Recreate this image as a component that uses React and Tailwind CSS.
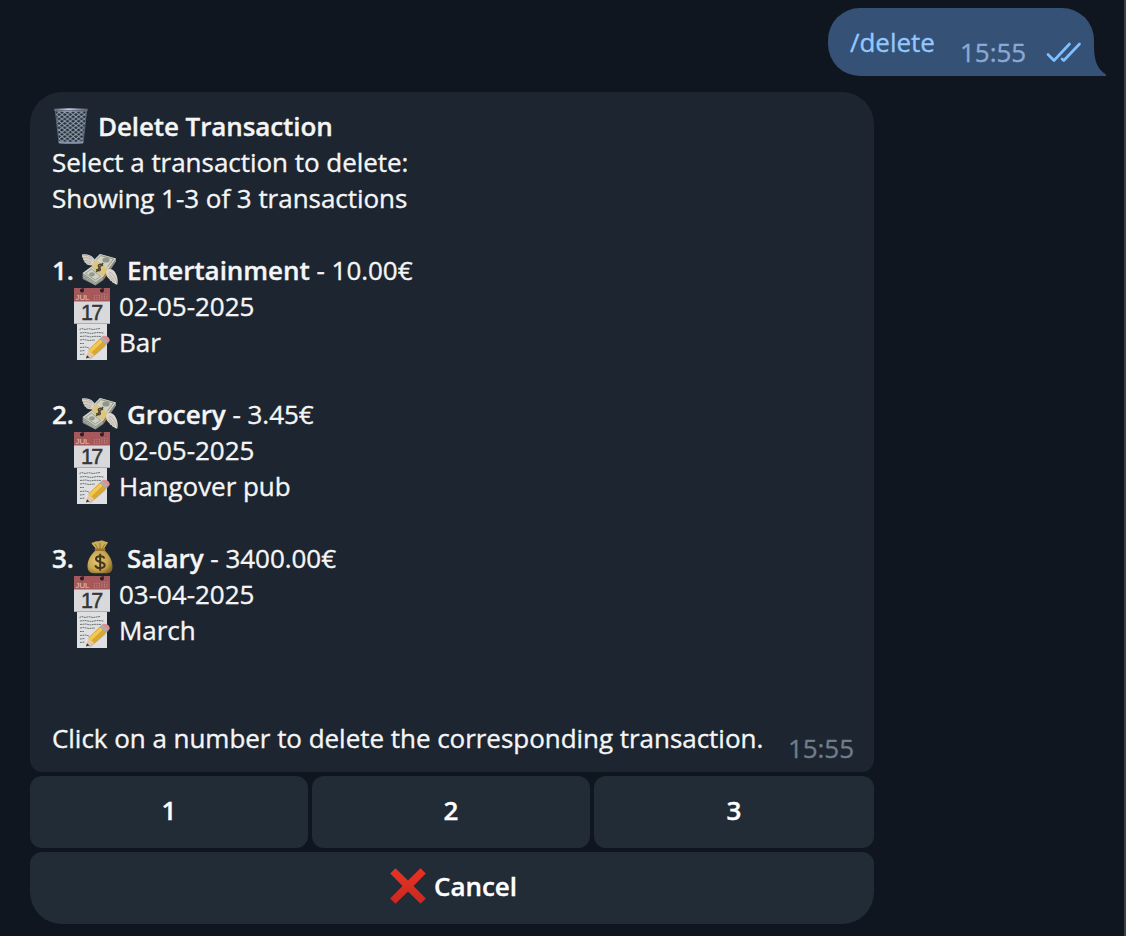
import React from 'react';

function Trash() {
  return (
    <svg className="h-9 w-9 shrink-0" viewBox="0 0 36 36">
      <defs>
        <pattern id="mesh" width="5.6" height="4.4" patternUnits="userSpaceOnUse">
          <path d="M0 0L5.600 4.400M5.600 0L0 4.400" stroke="#98a8b6" strokeWidth=".9" />
        </pattern>
        <linearGradient id="rim" x1="0" x2="1" y1="0" y2="0">
          <stop offset="0" stopColor="#626a73" />
          <stop offset=".4" stopColor="#c6d1e0" />
          <stop offset="1" stopColor="#665f5d" />
        </linearGradient>
      </defs>
      <g transform="translate(1.500 0)">
        <path d="M1.800 2L5.500 35H29.500L33.200 2Z" fill="#232c37" />
        <path d="M1.800 2L5.500 35H29.500L33.200 2Z" fill="url(#mesh)" stroke="#59636e" strokeWidth="1" />
        <path d="M5.200 33Q18 35 29.800 33L29.500 35.300Q18 36.300 5.500 35.300Z" fill="#8594a6" />
        <path d="M.7.700Q18-.3 34.300.700V3Q18 4.200.7 3Z" fill="url(#rim)" />
        <path d="M2 2.200Q18 3 33 2.200" fill="none" stroke="#535e78" strokeWidth=".8" />
      </g>
    </svg>
  );
}

function WingedMoney() {
  return (
    <svg className="h-9 w-9 shrink-0" viewBox="0 0 36 36">
      <path d="M12.500 13.500C7 14 4 12.500 3.800 11C2.500 10.800 2 9.500 2.500 8.800C1 8.300.8 7 1.300 6.300C0 5.500-.2 3.500.3 2.300C5 1.800 9.500 3 12 6.500C14 9 14 11.500 12.500 13.500Z" fill="#d6d2c8" />
      <path d="M1.500 6C5 5 8 6 10 8.500M2.800 8.800C5.500 8 7.500 9 9 10.500M4 11C6 10.500 7.500 11 9 12.300M1 3.300C5.500 3 8.500 4.500 10.500 6.500" stroke="#a3a098" strokeWidth=".7" fill="none" />
      <path d="M11.500 8.500L18 2L34 6.500V9.500L27 20L22.500 22Z" fill="#8b8e84" />
      <path d="M11.500 8.500L18 2L34 6.500L26 17.500L22 19.500Z" fill="#cfd2c4" />
      <path d="M14.500 7.800L18.800 3.600L31.500 7L25.500 15" fill="none" stroke="#81877b" strokeWidth=".8" />
      <ellipse cx="24" cy="8" rx="3.600" ry="2.600" fill="#8f968a" />
      <path d="M.7 21L9.500 14.500L21.500 25V28L13.500 33.500L.7 27Z" fill="#8b8e84" />
      <path d="M.7 21L9.500 14.500L21.500 24.500L13.500 30Z" fill="#cfd2c4" />
      <path d="M.7 22.500L13.500 31.300L21.500 26M.7 24.500L13.500 32.700" fill="none" stroke="#b9bbb0" strokeWidth=".7" />
      <path d="M3.500 21.300L9.500 17L18.500 24.500L13.300 28Z" fill="none" stroke="#81877b" strokeWidth=".7" />
      <ellipse cx="10" cy="22.300" rx="2.800" ry="2.100" fill="#949b8e" />
      <path d="M9.500 14.500L13.500 8L26.500 17L21.500 25Z" fill="#dfc680" />
      <path d="M21.500 25L26.500 17V20.500L21.500 28Z" fill="#a98945" />
      <path d="M21 13.600C18 11 15 13 17 15.200C19.500 17.500 18 20.200 14.200 17.300M14.300 20L21 11" fill="none" stroke="#4b432c" strokeWidth="1.500" />
      <path d="M24.500 18.500C27 15.500 31.500 17 33.500 21C35.500 24.500 36.200 28.500 35.300 32.500C33.500 32.500 32.300 31.800 32 31C30.800 31 30 30 29.800 29.200C28.200 29 27.500 28 27.500 27C25.500 26 23 22.500 24.500 18.500Z" fill="#dcd8ce" />
      <path d="M27 20C31 21 34 26 34.800 31M26.500 22C29.500 23.500 31.800 27 32.200 30.500M26.500 24.500C28.500 25.500 29.500 27 30 28.800" stroke="#a3a098" strokeWidth=".7" fill="none" />
    </svg>
  );
}

function MoneyBag() {
  return (
    <svg className="h-9 w-9 shrink-0" viewBox="0 0 36 36">
      <defs>
        <radialGradient id="bag" cx=".4" cy=".45" r=".65">
          <stop offset="0" stopColor="#e6c877" />
          <stop offset=".65" stopColor="#c7a44c" />
          <stop offset="1" stopColor="#8a6927" />
        </radialGradient>
      </defs>
      <path d="M14 10C8 15 5.500 21 5.500 26.500C5.500 30.500 7.500 33 11.500 33.300H25C29 33 30.700 30.500 30.500 26C30.300 20 27 14 22 10Z" fill="url(#bag)" />
      <path d="M9.500 2.500C12 3 12.500.8 15 1.200C17 1.500 17.500.5 20 .5C22 .6 23.500 2.500 26 2C25 5 23 6 22 10H14C13 6 10 5.500 9.500 2.500Z" fill="#cdab57" />
      <path d="M13 4L16 9M18 3V9M23 4L20 9" stroke="#8b6b2a" strokeWidth=".8" />
      <rect x="12.500" y="8.500" width="11" height="2.500" rx="1.200" fill="#9a742c" />
      <path d="M22.400 18.500C21.500 15.500 14 15.500 14 19.100C14 23 22.700 21 22.700 25.300C22.700 29.200 14 29 13.300 25.300M18.200 13.800V30.700" fill="none" stroke="#40351e" strokeWidth="2" />
    </svg>
  );
}

function Calendar() {
  return (
    <svg className="h-9 w-9 shrink-0" viewBox="0 0 36 36">
      <rect width="36" height="36" fill="#d9d9dc" />
      <rect width="36" height="13.500" fill="#a6585b" />
      <path d="M0 35.500H36" stroke="#adadb1" />
      <circle cx="8" cy="2.500" r="2" fill="#291d25" />
      <circle cx="28" cy="2.500" r="2" fill="#291d25" />
      <path d="M8 2.500L9.500 0M28 2.500L29.500 0" stroke="#2a2d34" strokeWidth="1.300" />
      <path d="M20.500 7V12M23 7V12M25.500 7V12M28 6V12M30.500 6V12M33 6V12" stroke="#bd8485" strokeWidth=".9" strokeDasharray="1.200 .7" />
      <text x="1.500" y="12" fill="#e0c8ca" fontSize="8" fontFamily="Liberation Sans, sans-serif" textLength="14" lengthAdjust="spacingAndGlyphs">JUL</text>
      <text x="7" y="31.700" fill="#35363b" stroke="#35363b" strokeWidth=".5" fontSize="21.500" fontFamily="Liberation Sans, sans-serif" letterSpacing="-1.800">17</text>
    </svg>
  );
}

function Memo() {
  return (
    <svg className="h-9 w-9 shrink-0" viewBox="0 0 36 36">
      <rect x="3" y="0" width="30" height="36" fill="#dfe0e2" />
      <path d="M5.500 5.500L8 4.500L11 5.500L15 4.700L19 5.500L26 4.500M6 9L11 8.500L17 9.500L23 8.500L30 9M6 12.500L12 12L16 13L21 12.300L27 12.500M6 16L10 15.500L15 16.500L21 16M6 19.500H10M6 23.500L12 23L15 24M6 27L11 26.500M6 30.500L11 30" fill="none" stroke="#62656b" strokeWidth=".9" strokeDasharray="1.900 .5" />
      <path d="M15 34.500L31 21" stroke="#9da0a4" strokeWidth="3" opacity=".5" />
      <path d="M12 34.500L14.500 25.500L20.500 31.500Z" fill="#e8c799" />
      <path d="M12 34.500L13 31.300L15.500 33.500Z" fill="#333" />
      <path d="M14.500 25.500L26 14.500L32.500 20.500L20.500 31.500Z" fill="#dba62c" />
      <path d="M15.200 25.700L26.700 15L29.200 17.300L17.500 28.200Z" fill="#f0ca57" />
      <path d="M25.500 15L27.500 13L34 19L32 21Z" fill="#a5aeb7" />
      <path d="M27.500 13C29.500 10.800 32.500 11.500 34.500 13.500C36.500 15.500 35.800 17.300 34 19Z" fill="#db918f" />
    </svg>
  );
}

function Cross() {
  return (
    <svg className="h-9 w-9 shrink-0" viewBox="0 0 36 36">
      <defs>
        <linearGradient id="cross" x1="0" x2="0" y1="0" y2="1">
          <stop stopColor="#e73324" />
          <stop offset="1" stopColor="#cb281f" />
        </linearGradient>
      </defs>
      <path d="M5.500.300L18 12.500L30.500.300L35.800 5.500L23.500 18L35.800 30.500L30.500 35.700L18 23.500L5.500 35.700L.2 30.500L12.500 18L.2 5.500Z" fill="url(#cross)" />
    </svg>
  );
}

const transactions = [
  { no: '1.', name: 'Entertainment', amount: '10.00€', date: '02-05-2025', note: 'Bar', Icon: WingedMoney },
  { no: '2.', name: 'Grocery', amount: '3.45€', date: '02-05-2025', note: 'Hangover pub', Icon: WingedMoney },
  { no: '3.', name: 'Salary', amount: '3400.00€', date: '03-04-2025', note: 'March', Icon: MoneyBag },
];

function Transaction({ item }) {
  const { Icon } = item;
  return (
    <div className="mb-9">
      <div className="flex">
        <span className="w-[30px] font-semibold">{item.no}</span>
        <Icon />
        <span className="ml-[9px] whitespace-pre"><b className="font-semibold">{item.name}</b> - {item.amount}</span>
      </div>
      <div className="flex pl-[22px]"><Calendar /><span className="ml-[9px]">{item.date}</span></div>
      <div className="flex pl-[22px]"><Memo /><span className="ml-[9px]">{item.note}</span></div>
    </div>
  );
}

export default function App() {
  return (
    <div className="flex h-[936px] w-[1126px] flex-col overflow-hidden border-r-2 border-[#3a3e45] bg-[#0f161f] pl-[30px] pt-2 font-['Open_Sans',sans-serif] text-[26px] leading-9 tracking-[-0.035px] text-[#f5f5f5] [-webkit-text-stroke:0.35px_currentColor]">
      <div className="relative mr-[30px] flex h-[68px] w-[266px] shrink-0 self-end rounded-[32px] rounded-br-none bg-[#355175] pl-[22px] pt-4 text-[#92c8ff]">
        <span className="w-[110px]">/delete</span>
        <span className="mt-[10px] w-[86px] text-[#8aaad4]">15:55</span>
        <svg className="mt-4 h-6 w-9" viewBox="0 0 36 24" fill="none" stroke="#7fbfff" strokeWidth="2.700" strokeLinecap="round" strokeLinejoin="round">
          <path d="M2 14.500L8 20.500L23.500 4M16 19L17.800 20.500L33.500 4" />
        </svg>
        <svg className="absolute -right-3 bottom-0 h-9 w-[14px]" viewBox="0 0 14 36">
          <path d="M0 0H2V6C2 20 5 29 14 34.500V36H0Z" fill="#355175" />
        </svg>
      </div>
      <div className="mt-4 h-[680px] w-[844px] shrink-0 rounded-b-xl rounded-t-[32px] bg-[#1c2530] px-[22px] py-4">
        <div className="flex"><Trash /><b className="ml-[10px] font-semibold tracking-[-0.1px]">Delete Transaction</b></div>
        <div>Select a transaction to delete:</div>
        <div className="mb-9">Showing 1-3 of 3 transactions</div>
        {transactions.map((item) => <Transaction key={item.no} item={item} />)}
        <div className="mt-[72px] flex justify-between">
          <span>Click on a number to delete the corresponding transaction.</span>
          <span className="mt-[10px] -mr-[2px] text-[#717c89]">15:55</span>
        </div>
      </div>
      <div className="mt-1 grid h-[72px] w-[844px] shrink-0 grid-cols-[278px_278px_280px] gap-1 text-center font-semibold text-white">
        {[1, 2, 3].map((n) => <button key={n} className="rounded-xl bg-[#212c37] pb-1">{n}</button>)}
      </div>
      <button className="mt-1 flex h-[72px] w-[844px] shrink-0 items-center justify-center gap-2 rounded-b-[32px] rounded-t-xl bg-[#212c37] pb-1 pl-[3px] font-semibold text-white">
        <Cross /><span>Cancel</span>
      </button>
    </div>
  );
}
